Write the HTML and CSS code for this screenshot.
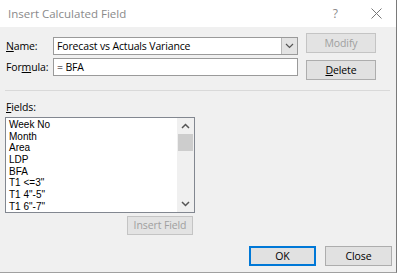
FILE: index.html
```html
<!DOCTYPE html>
<html>
<head>
<meta charset="utf-8">
<link rel="stylesheet" href="styles.css">
</head>
<body>
<div class="dialog">
  <div class="titlebar">
    <span class="title">Insert Calculated Field</span>
    <span class="help">?</span>
    <svg class="close-x" width="11" height="11" viewBox="0 0 11 11"><path d="M0.5 0.5 L10.5 10.5 M10.5 0.5 L0.5 10.5" stroke="#777" stroke-width="1" fill="none"/></svg>
  </div>
  <div class="top">
    <div class="form">
      <label class="lbl"><u>N</u>ame:</label>
      <div class="combo">
        <span class="val">Forecast vs Actuals Variance</span>
        <span class="dd"><svg width="9" height="6" viewBox="0 0 9 6"><path d="M1 1 L4.5 4.5 L8 1" stroke="#555" stroke-width="1.2" fill="none"/></svg></span>
      </div>
      <label class="lbl">For<u>m</u>ula:</label>
      <div class="input"><span class="val">= BFA</span></div>
    </div>
    <div class="side">
      <button class="btn disabled">Modify</button>
      <button class="btn"><u>D</u>elete</button>
    </div>
  </div>
  <div class="sep"></div>
  <div class="fields-lbl"><u>F</u>ields:</div>
  <div class="listbox">
    <ul class="items">
      <li>Week No</li>
      <li>Month</li>
      <li>Area</li>
      <li>LDP</li>
      <li>BFA</li>
      <li>T1 &lt;=3"</li>
      <li>T1 4"-5"</li>
      <li>T1 6"-7"</li>
    </ul>
    <div class="scroll">
      <svg class="arr" width="9" height="6" viewBox="0 0 9 6"><path d="M1 5 L4.5 1.5 L8 5" stroke="#555" stroke-width="1.5" fill="none"/></svg>
      <div class="thumb"></div>
      <div class="track"></div>
      <svg class="arr" width="9" height="6" viewBox="0 0 9 6"><path d="M1 1 L4.5 4.5 L8 1" stroke="#555" stroke-width="1.5" fill="none"/></svg>
    </div>
  </div>
  <div class="insert-row"><button class="btn disabled insert">Insert Field</button></div>
  <div class="footer">
    <button class="btn ok">OK</button>
    <button class="btn">Close</button>
  </div>
</div>
</body>
</html>
```
FILE: styles.css
```css
* { box-sizing: border-box; }
body {
  margin: 0;
  background: #fff;
  font-family: "Open Sans", "Noto Sans", sans-serif;
  font-size: 10.5px;
  letter-spacing: -0.15px;
  color: #000;
}
.dialog {
  width: 397px;
  height: 273px;
  background: #f0f0f0;
  border-right: 1px solid #7a7a7a;
  border-bottom: 1px solid #a0a0a0;
  display: flex;
  flex-direction: column;
}
.titlebar {
  height: 27px;
  background: #fff;
  display: flex;
  align-items: center;
  padding-left: 8px;
  flex-shrink: 0;
  letter-spacing: 0;
}
.title {
  flex: 1;
  color: #8a8a8a;
  font-size: 11.5px;
}
.help {
  color: #8a8a8a;
  font-size: 12px;
  margin-right: 33px;
}
.close-x { margin-right: 14px; }
.top {
  display: flex;
  padding-left: 6px;
}
.form {
  display: grid;
  grid-template-columns: 47px 245px;
  grid-auto-rows: 18px;
  row-gap: 3px;
  margin-top: 10px;
  align-items: center;
}
.lbl { line-height: 18px; }
.combo, .input {
  height: 18px;
  border: 1px solid #9a9a9a;
  background: #fff;
  display: flex;
  align-items: center;
}
.val { flex: 1; padding-left: 3px; line-height: 16px; }
.dd {
  width: 16px;
  height: 16px;
  background: #e3e3e3;
  border-left: 1px solid #b8b8b8;
  display: flex;
  align-items: center;
  justify-content: center;
}
.side {
  display: flex;
  flex-direction: column;
  gap: 7px;
  margin-left: 8px;
  margin-top: 6px;
}
.btn {
  font-family: inherit;
  font-size: 10.5px;
  letter-spacing: -0.1px;
  color: #000;
  background: #e1e1e1;
  border: 1px solid #adadad;
  height: 20px;
  width: 70px;
  padding: 0;
  margin: 0;
  line-height: 18px;
}
.btn.disabled {
  color: #9f9f9f;
  background: #e3e3e3;
  border-color: #c4c4c4;
}
.sep {
  height: 1px;
  background: #d9d9d9;
  margin: 10px 6px 0 5px;
}
.fields-lbl {
  margin: 10px 0 4px 6px;
  line-height: 12px;
}
.listbox {
  margin-left: 5px;
  width: 190px;
  height: 96px;
  border: 1px solid #828790;
  background: #fff;
  display: flex;
}
.items {
  list-style: none;
  margin: 0;
  padding: 1px 0 0 3px;
  flex: 1;
  font-family: "Liberation Sans", Arial, sans-serif;
  font-size: 10px;
  letter-spacing: 0;
}
.items li { line-height: 11.7px; height: 11.7px; }
.scroll {
  width: 17px;
  background: #f0f0f0;
  display: flex;
  flex-direction: column;
  align-items: center;
}
.arr { margin-top: 5px; margin-bottom: 5px; flex-shrink: 0; }
.thumb {
  width: 15px;
  height: 17px;
  background: #cdcdcd;
  flex-shrink: 0;
}
.track { flex: 1; }
.insert-row {
  width: 195px;
  display: flex;
  justify-content: flex-end;
  margin-top: 3px;
  padding-right: 2px;
}
.btn.insert { width: 66px; height: 19px; line-height: 17px; }
.footer {
  display: flex;
  justify-content: flex-end;
  gap: 9px;
  margin-top: 11px;
  padding-right: 4px;
}
.footer .btn { width: 67px; }
.btn.ok {
  border: 2px solid #0078d7;
  line-height: 16px;
}
```
